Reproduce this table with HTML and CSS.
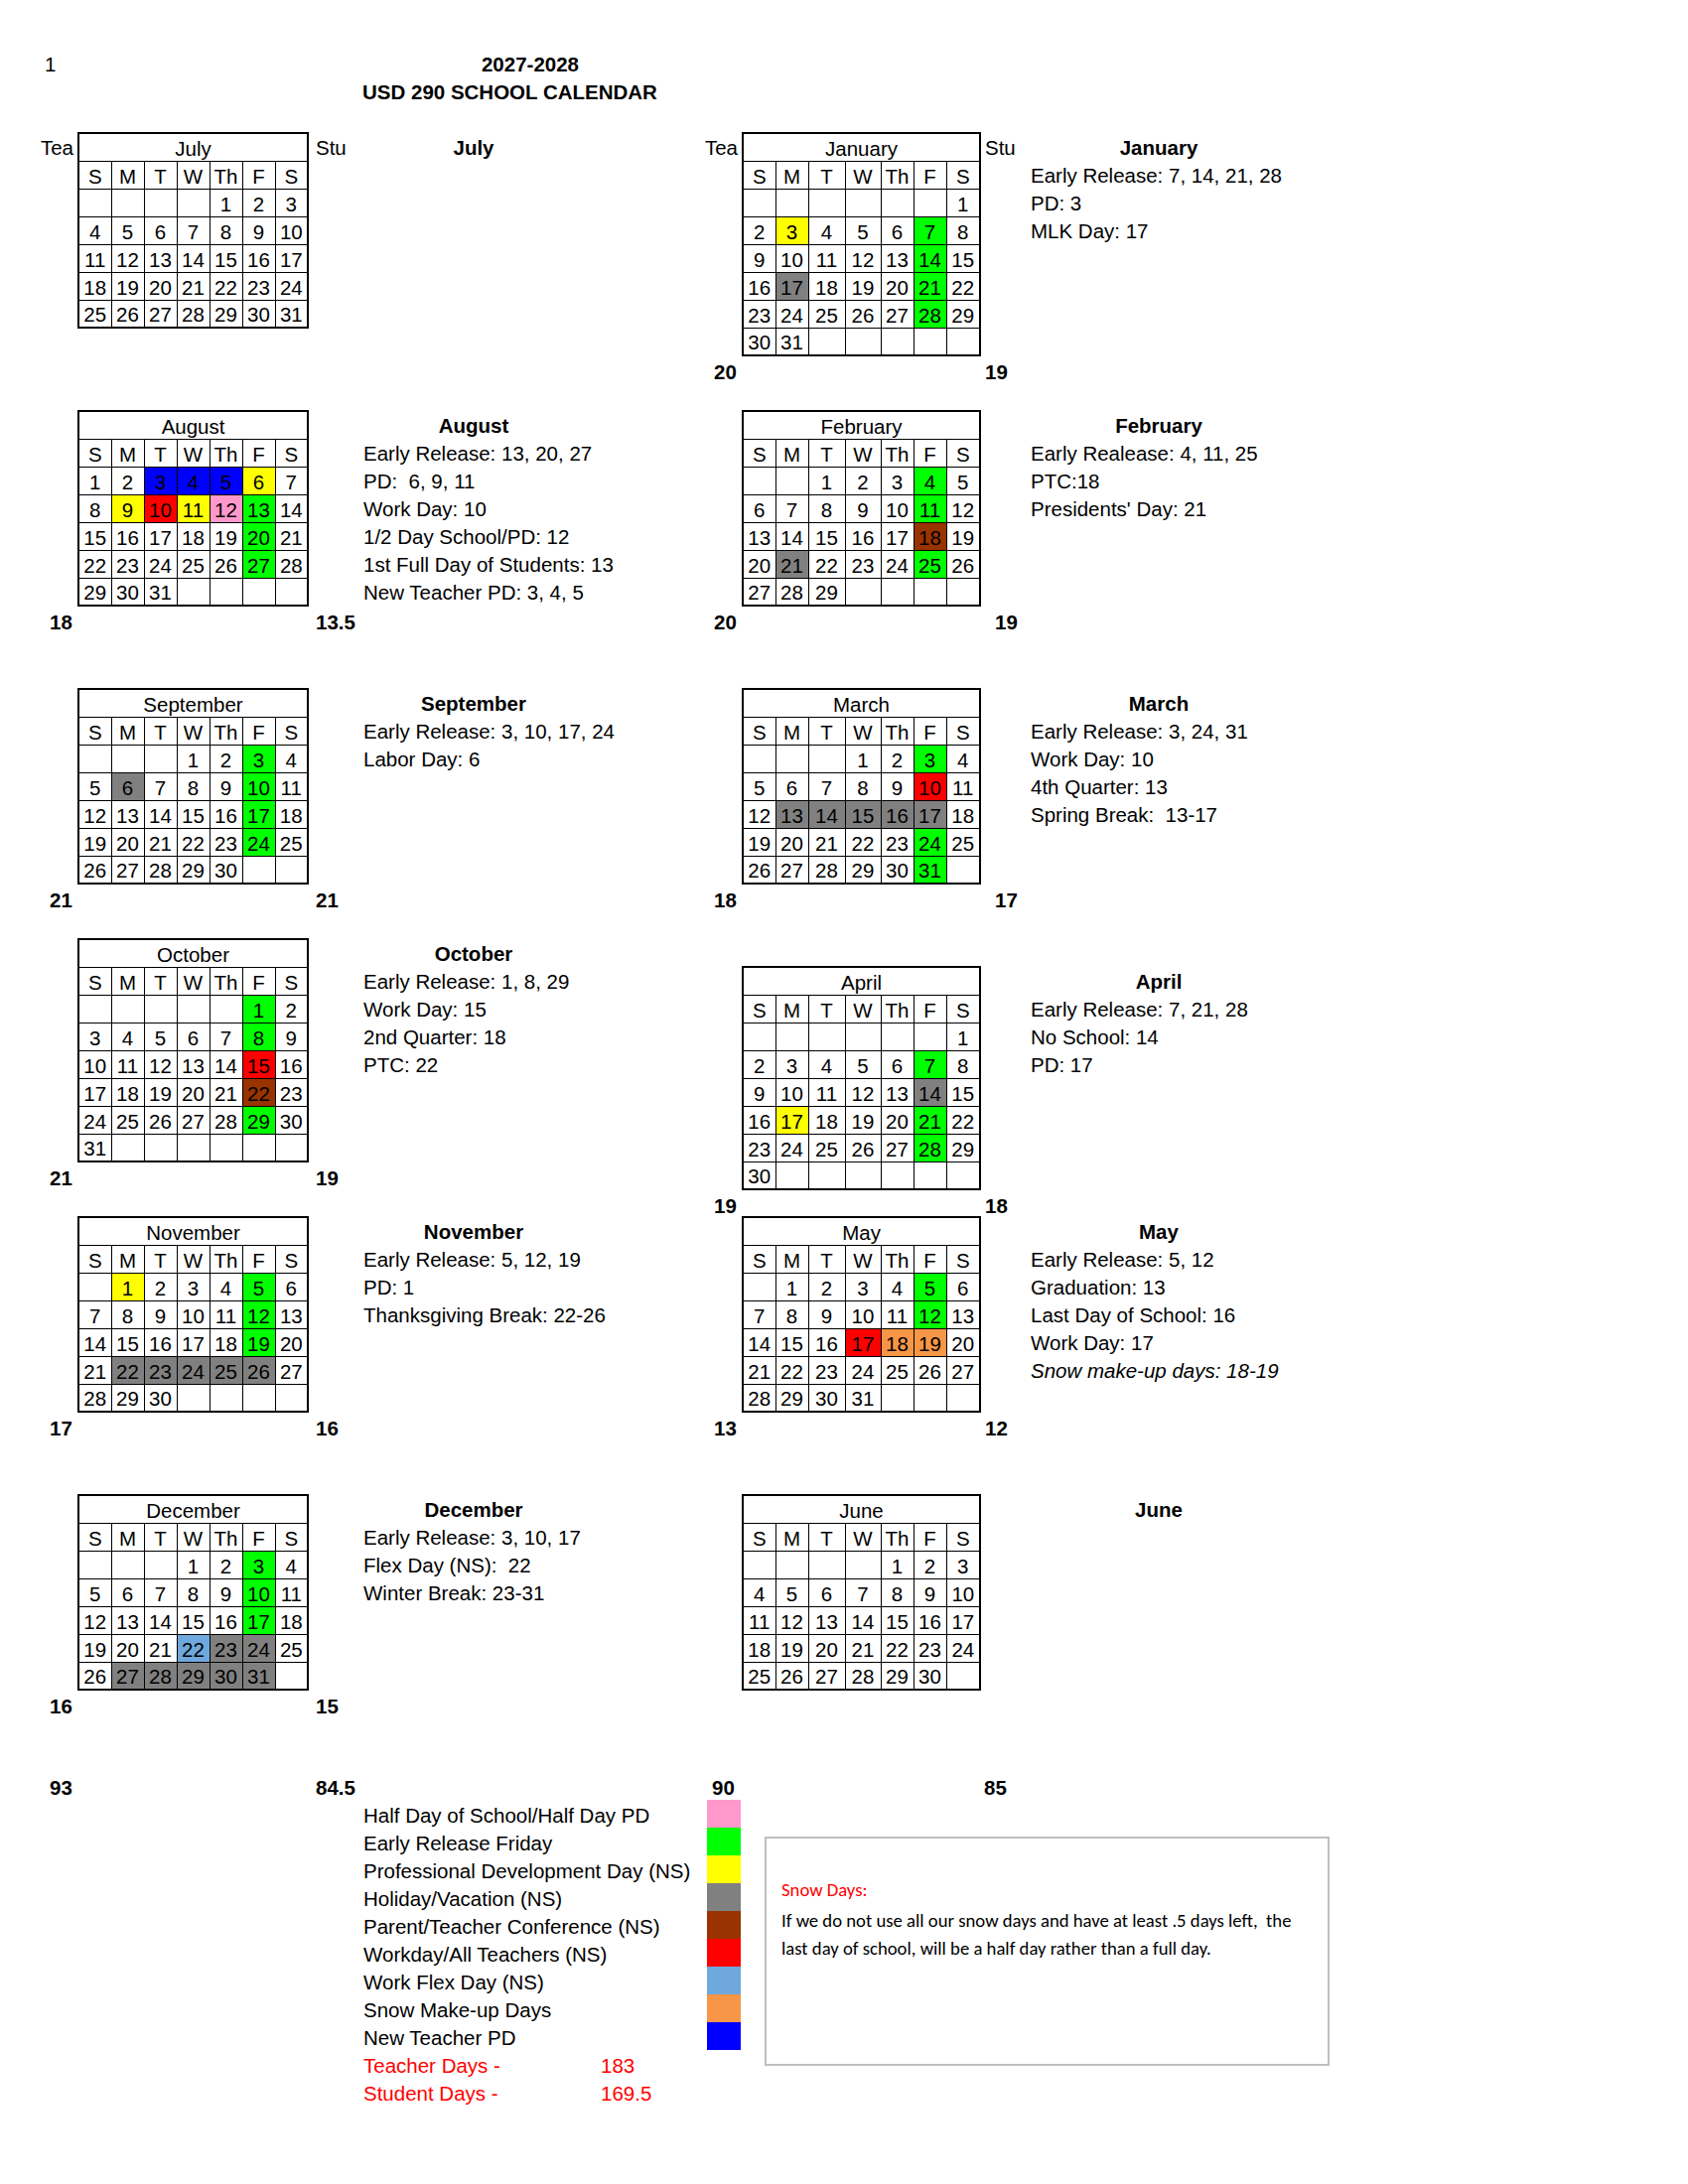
FILE: index.html
```html
<!DOCTYPE html>
<html lang="en">
<head>
<meta charset="utf-8">
<title>USD 290 School Calendar 2027-2028</title>
<link rel="stylesheet" href="styles.css">
</head>
<body>
<div class="page">
  <div class="hdr">
    <div class="hdr-row line"><span class="pg-num">1</span><span class="yr">2027-2028</span></div>
    <div class="line title">USD 290 SCHOOL CALENDAR</div>
  </div>

  <!-- July / January -->
  <div class="band">
    <div class="side left">
      <div class="tea"><div class="line lbl">Tea</div></div>
      <div class="cal-wrap">
        <table class="cal">
          <colgroup><col class="c33"><col class="c33"><col class="c33"><col class="c33"><col class="c33"><col class="c33"><col class="c33"></colgroup>
          <tr><th colspan="7">July</th></tr>
          <tr><td>S</td><td>M</td><td>T</td><td>W</td><td>Th</td><td>F</td><td>S</td></tr>
          <tr><td></td><td></td><td></td><td></td><td>1</td><td>2</td><td>3</td></tr>
          <tr><td>4</td><td>5</td><td>6</td><td>7</td><td>8</td><td>9</td><td>10</td></tr>
          <tr><td>11</td><td>12</td><td>13</td><td>14</td><td>15</td><td>16</td><td>17</td></tr>
          <tr><td>18</td><td>19</td><td>20</td><td>21</td><td>22</td><td>23</td><td>24</td></tr>
          <tr><td>25</td><td>26</td><td>27</td><td>28</td><td>29</td><td>30</td><td>31</td></tr>
        </table>
      </div>
      <div class="stu"><div class="line">Stu</div></div>
      <div class="desc"><div class="line head">July</div></div>
    </div>
    <div class="side right">
      <div class="tea"><div class="line lbl">Tea</div><div class="line tot">20</div></div>
      <div class="cal-wrap">
        <table class="cal">
          <colgroup><col class="c33"><col class="c33"><col class="c37"><col class="c36"><col class="c33"><col class="c33"><col class="c34"></colgroup>
          <tr><th colspan="7">January</th></tr>
          <tr><td>S</td><td>M</td><td>T</td><td>W</td><td>Th</td><td>F</td><td>S</td></tr>
          <tr><td></td><td></td><td></td><td></td><td></td><td></td><td>1</td></tr>
          <tr><td>2</td><td class="y">3</td><td>4</td><td>5</td><td>6</td><td class="g">7</td><td>8</td></tr>
          <tr><td>9</td><td>10</td><td>11</td><td>12</td><td>13</td><td class="g">14</td><td>15</td></tr>
          <tr><td>16</td><td class="k">17</td><td>18</td><td>19</td><td>20</td><td class="g">21</td><td>22</td></tr>
          <tr><td>23</td><td>24</td><td>25</td><td>26</td><td>27</td><td class="g">28</td><td>29</td></tr>
          <tr><td>30</td><td>31</td><td></td><td></td><td></td><td></td><td></td></tr>
        </table>
        <div class="line"></div>
      </div>
      <div class="stu"><div class="line">Stu</div><div class="line tot">19</div></div>
      <div class="desc">
        <div class="line head">January</div>
        <div class="line">Early Release: 7, 14, 21, 28</div>
        <div class="line">PD: 3</div>
        <div class="line">MLK Day: 17</div>
      </div>
    </div>
  </div>

  <!-- August / February -->
  <div class="band">
    <div class="side left">
      <div class="tea"><div class="line tot">18</div></div>
      <div class="cal-wrap">
        <table class="cal">
          <colgroup><col class="c33"><col class="c33"><col class="c33"><col class="c33"><col class="c33"><col class="c33"><col class="c33"></colgroup>
          <tr><th colspan="7">August</th></tr>
          <tr><td>S</td><td>M</td><td>T</td><td>W</td><td>Th</td><td>F</td><td>S</td></tr>
          <tr><td>1</td><td>2</td><td class="b">3</td><td class="b">4</td><td class="b">5</td><td class="y">6</td><td>7</td></tr>
          <tr><td>8</td><td class="y">9</td><td class="r">10</td><td class="y">11</td><td class="p">12</td><td class="g">13</td><td>14</td></tr>
          <tr><td>15</td><td>16</td><td>17</td><td>18</td><td>19</td><td class="g">20</td><td>21</td></tr>
          <tr><td>22</td><td>23</td><td>24</td><td>25</td><td>26</td><td class="g">27</td><td>28</td></tr>
          <tr><td>29</td><td>30</td><td>31</td><td></td><td></td><td></td><td></td></tr>
        </table>
        <div class="line"></div>
      </div>
      <div class="stu"><div class="line tot">13.5</div></div>
      <div class="desc">
        <div class="line head">August</div>
        <div class="line">Early Release: 13, 20, 27</div>
        <div class="line">PD: &nbsp;6, 9, 11</div>
        <div class="line">Work Day: 10</div>
        <div class="line">1/2 Day School/PD: 12</div>
        <div class="line">1st Full Day of Students: 13</div>
        <div class="line">New Teacher PD: 3, 4, 5</div>
      </div>
    </div>
    <div class="side right">
      <div class="tea"><div class="line tot">20</div></div>
      <div class="cal-wrap">
        <table class="cal">
          <colgroup><col class="c33"><col class="c33"><col class="c37"><col class="c36"><col class="c33"><col class="c33"><col class="c34"></colgroup>
          <tr><th colspan="7">February</th></tr>
          <tr><td>S</td><td>M</td><td>T</td><td>W</td><td>Th</td><td>F</td><td>S</td></tr>
          <tr><td></td><td></td><td>1</td><td>2</td><td>3</td><td class="g">4</td><td>5</td></tr>
          <tr><td>6</td><td>7</td><td>8</td><td>9</td><td>10</td><td class="g">11</td><td>12</td></tr>
          <tr><td>13</td><td>14</td><td>15</td><td>16</td><td>17</td><td class="n">18</td><td>19</td></tr>
          <tr><td>20</td><td class="k">21</td><td>22</td><td>23</td><td>24</td><td class="g">25</td><td>26</td></tr>
          <tr><td>27</td><td>28</td><td>29</td><td></td><td></td><td></td><td></td></tr>
        </table>
        <div class="line"></div>
      </div>
      <div class="stu"><div class="line tot far">19</div></div>
      <div class="desc">
        <div class="line head">February</div>
        <div class="line">Early Realease: 4, 11, 25</div>
        <div class="line">PTC:18</div>
        <div class="line">Presidents' Day: 21</div>
      </div>
    </div>
  </div>

  <!-- September / March -->
  <div class="band short">
    <div class="side left">
      <div class="tea"><div class="line tot">21</div></div>
      <div class="cal-wrap">
        <table class="cal">
          <colgroup><col class="c33"><col class="c33"><col class="c33"><col class="c33"><col class="c33"><col class="c33"><col class="c33"></colgroup>
          <tr><th colspan="7">September</th></tr>
          <tr><td>S</td><td>M</td><td>T</td><td>W</td><td>Th</td><td>F</td><td>S</td></tr>
          <tr><td></td><td></td><td></td><td>1</td><td>2</td><td class="g">3</td><td>4</td></tr>
          <tr><td>5</td><td class="k">6</td><td>7</td><td>8</td><td>9</td><td class="g">10</td><td>11</td></tr>
          <tr><td>12</td><td>13</td><td>14</td><td>15</td><td>16</td><td class="g">17</td><td>18</td></tr>
          <tr><td>19</td><td>20</td><td>21</td><td>22</td><td>23</td><td class="g">24</td><td>25</td></tr>
          <tr><td>26</td><td>27</td><td>28</td><td>29</td><td>30</td><td></td><td></td></tr>
        </table>
        <div class="line"></div>
      </div>
      <div class="stu"><div class="line tot">21</div></div>
      <div class="desc">
        <div class="line head">September</div>
        <div class="line">Early Release: 3, 10, 17, 24</div>
        <div class="line">Labor Day: 6</div>
      </div>
    </div>
    <div class="side right">
      <div class="tea"><div class="line tot">18</div></div>
      <div class="cal-wrap">
        <table class="cal">
          <colgroup><col class="c33"><col class="c33"><col class="c37"><col class="c36"><col class="c33"><col class="c33"><col class="c34"></colgroup>
          <tr><th colspan="7">March</th></tr>
          <tr><td>S</td><td>M</td><td>T</td><td>W</td><td>Th</td><td>F</td><td>S</td></tr>
          <tr><td></td><td></td><td></td><td>1</td><td>2</td><td class="g">3</td><td>4</td></tr>
          <tr><td>5</td><td>6</td><td>7</td><td>8</td><td>9</td><td class="r">10</td><td>11</td></tr>
          <tr><td>12</td><td class="k">13</td><td class="k">14</td><td class="k">15</td><td class="k">16</td><td class="k">17</td><td>18</td></tr>
          <tr><td>19</td><td>20</td><td>21</td><td>22</td><td>23</td><td class="g">24</td><td>25</td></tr>
          <tr><td>26</td><td>27</td><td>28</td><td>29</td><td>30</td><td class="g">31</td><td></td></tr>
        </table>
        <div class="line"></div>
      </div>
      <div class="stu"><div class="line tot far">17</div></div>
      <div class="desc">
        <div class="line head">March</div>
        <div class="line">Early Release: 3, 24, 31</div>
        <div class="line">Work Day: 10</div>
        <div class="line">4th Quarter: 13</div>
        <div class="line">Spring Break: &nbsp;13-17</div>
      </div>
    </div>
  </div>

  <!-- October / April -->
  <div class="band">
    <div class="side left">
      <div class="tea"><div class="line tot">21</div></div>
      <div class="cal-wrap">
        <table class="cal">
          <colgroup><col class="c33"><col class="c33"><col class="c33"><col class="c33"><col class="c33"><col class="c33"><col class="c33"></colgroup>
          <tr><th colspan="7">October</th></tr>
          <tr><td>S</td><td>M</td><td>T</td><td>W</td><td>Th</td><td>F</td><td>S</td></tr>
          <tr><td></td><td></td><td></td><td></td><td></td><td class="g">1</td><td>2</td></tr>
          <tr><td>3</td><td>4</td><td>5</td><td>6</td><td>7</td><td class="g">8</td><td>9</td></tr>
          <tr><td>10</td><td>11</td><td>12</td><td>13</td><td>14</td><td class="r">15</td><td>16</td></tr>
          <tr><td>17</td><td>18</td><td>19</td><td>20</td><td>21</td><td class="n">22</td><td>23</td></tr>
          <tr><td>24</td><td>25</td><td>26</td><td>27</td><td>28</td><td class="g">29</td><td>30</td></tr>
          <tr><td>31</td><td></td><td></td><td></td><td></td><td></td><td></td></tr>
        </table>
        <div class="line"></div>
      </div>
      <div class="stu"><div class="line tot">19</div></div>
      <div class="desc">
        <div class="line head">October</div>
        <div class="line">Early Release: 1, 8, 29</div>
        <div class="line">Work Day: 15</div>
        <div class="line">2nd Quarter: 18</div>
        <div class="line">PTC: 22</div>
      </div>
    </div>
    <div class="side right shift">
      <div class="tea"><div class="line tot">19</div></div>
      <div class="cal-wrap">
        <table class="cal">
          <colgroup><col class="c33"><col class="c33"><col class="c37"><col class="c36"><col class="c33"><col class="c33"><col class="c34"></colgroup>
          <tr><th colspan="7">April</th></tr>
          <tr><td>S</td><td>M</td><td>T</td><td>W</td><td>Th</td><td>F</td><td>S</td></tr>
          <tr><td></td><td></td><td></td><td></td><td></td><td></td><td>1</td></tr>
          <tr><td>2</td><td>3</td><td>4</td><td>5</td><td>6</td><td class="g">7</td><td>8</td></tr>
          <tr><td>9</td><td>10</td><td>11</td><td>12</td><td>13</td><td class="k">14</td><td>15</td></tr>
          <tr><td>16</td><td class="y">17</td><td>18</td><td>19</td><td>20</td><td class="g">21</td><td>22</td></tr>
          <tr><td>23</td><td>24</td><td>25</td><td>26</td><td>27</td><td class="g">28</td><td>29</td></tr>
          <tr><td>30</td><td></td><td></td><td></td><td></td><td></td><td></td></tr>
        </table>
        <div class="line"></div>
      </div>
      <div class="stu"><div class="line tot">18</div></div>
      <div class="desc">
        <div class="line head">April</div>
        <div class="line">Early Release: 7, 21, 28</div>
        <div class="line">No School: 14</div>
        <div class="line">PD: 17</div>
      </div>
    </div>
  </div>

  <!-- November / May -->
  <div class="band">
    <div class="side left">
      <div class="tea"><div class="line tot">17</div></div>
      <div class="cal-wrap">
        <table class="cal">
          <colgroup><col class="c33"><col class="c33"><col class="c33"><col class="c33"><col class="c33"><col class="c33"><col class="c33"></colgroup>
          <tr><th colspan="7">November</th></tr>
          <tr><td>S</td><td>M</td><td>T</td><td>W</td><td>Th</td><td>F</td><td>S</td></tr>
          <tr><td></td><td class="y">1</td><td>2</td><td>3</td><td>4</td><td class="g">5</td><td>6</td></tr>
          <tr><td>7</td><td>8</td><td>9</td><td>10</td><td>11</td><td class="g">12</td><td>13</td></tr>
          <tr><td>14</td><td>15</td><td>16</td><td>17</td><td>18</td><td class="g">19</td><td>20</td></tr>
          <tr><td>21</td><td class="k">22</td><td class="k">23</td><td class="k">24</td><td class="k">25</td><td class="k">26</td><td>27</td></tr>
          <tr><td>28</td><td>29</td><td>30</td><td></td><td></td><td></td><td></td></tr>
        </table>
        <div class="line"></div>
      </div>
      <div class="stu"><div class="line tot">16</div></div>
      <div class="desc">
        <div class="line head">November</div>
        <div class="line">Early Release: 5, 12, 19</div>
        <div class="line">PD: 1</div>
        <div class="line">Thanksgiving Break: 22-26</div>
      </div>
    </div>
    <div class="side right">
      <div class="tea"><div class="line tot">13</div></div>
      <div class="cal-wrap">
        <table class="cal">
          <colgroup><col class="c33"><col class="c33"><col class="c37"><col class="c36"><col class="c33"><col class="c33"><col class="c34"></colgroup>
          <tr><th colspan="7">May</th></tr>
          <tr><td>S</td><td>M</td><td>T</td><td>W</td><td>Th</td><td>F</td><td>S</td></tr>
          <tr><td></td><td>1</td><td>2</td><td>3</td><td>4</td><td class="g">5</td><td>6</td></tr>
          <tr><td>7</td><td>8</td><td>9</td><td>10</td><td>11</td><td class="g">12</td><td>13</td></tr>
          <tr><td>14</td><td>15</td><td>16</td><td class="r">17</td><td class="o">18</td><td class="o">19</td><td>20</td></tr>
          <tr><td>21</td><td>22</td><td>23</td><td>24</td><td>25</td><td>26</td><td>27</td></tr>
          <tr><td>28</td><td>29</td><td>30</td><td>31</td><td></td><td></td><td></td></tr>
        </table>
        <div class="line"></div>
      </div>
      <div class="stu"><div class="line tot">12</div></div>
      <div class="desc">
        <div class="line head">May</div>
        <div class="line">Early Release: 5, 12</div>
        <div class="line">Graduation: 13</div>
        <div class="line">Last Day of School: 16</div>
        <div class="line">Work Day: 17</div>
        <div class="line it">Snow make-up days: 18-19</div>
      </div>
    </div>
  </div>

  <!-- December / June -->
  <div class="band">
    <div class="side left">
      <div class="tea"><div class="line tot">16</div></div>
      <div class="cal-wrap">
        <table class="cal">
          <colgroup><col class="c33"><col class="c33"><col class="c33"><col class="c33"><col class="c33"><col class="c33"><col class="c33"></colgroup>
          <tr><th colspan="7">December</th></tr>
          <tr><td>S</td><td>M</td><td>T</td><td>W</td><td>Th</td><td>F</td><td>S</td></tr>
          <tr><td></td><td></td><td></td><td>1</td><td>2</td><td class="g">3</td><td>4</td></tr>
          <tr><td>5</td><td>6</td><td>7</td><td>8</td><td>9</td><td class="g">10</td><td>11</td></tr>
          <tr><td>12</td><td>13</td><td>14</td><td>15</td><td>16</td><td class="g">17</td><td>18</td></tr>
          <tr><td>19</td><td>20</td><td>21</td><td class="l">22</td><td class="k">23</td><td class="k">24</td><td>25</td></tr>
          <tr><td>26</td><td class="k">27</td><td class="k">28</td><td class="k">29</td><td class="k">30</td><td class="k">31</td><td></td></tr>
        </table>
        <div class="line"></div>
      </div>
      <div class="stu"><div class="line tot">15</div></div>
      <div class="desc">
        <div class="line head">December</div>
        <div class="line">Early Release: 3, 10, 17</div>
        <div class="line">Flex Day (NS): &nbsp;22</div>
        <div class="line">Winter Break: 23-31</div>
      </div>
    </div>
    <div class="side right">
      <div class="tea"></div>
      <div class="cal-wrap">
        <table class="cal">
          <colgroup><col class="c33"><col class="c33"><col class="c37"><col class="c36"><col class="c33"><col class="c33"><col class="c34"></colgroup>
          <tr><th colspan="7">June</th></tr>
          <tr><td>S</td><td>M</td><td>T</td><td>W</td><td>Th</td><td>F</td><td>S</td></tr>
          <tr><td></td><td></td><td></td><td></td><td>1</td><td>2</td><td>3</td></tr>
          <tr><td>4</td><td>5</td><td>6</td><td>7</td><td>8</td><td>9</td><td>10</td></tr>
          <tr><td>11</td><td>12</td><td>13</td><td>14</td><td>15</td><td>16</td><td>17</td></tr>
          <tr><td>18</td><td>19</td><td>20</td><td>21</td><td>22</td><td>23</td><td>24</td></tr>
          <tr><td>25</td><td>26</td><td>27</td><td>28</td><td>29</td><td>30</td><td></td></tr>
        </table>
      </div>
      <div class="stu"></div>
      <div class="desc"><div class="line head">June</div></div>
    </div>
  </div>

  <!-- Totals and legend -->
  <div class="foot">
    <div class="line foot-tot"><span class="ft1">93</span><span class="ft2">84.5</span><span class="ft3">90</span><span>85</span></div>
    <div class="foot-main">
      <div class="legend">
        <div class="line">Half Day of School/Half Day PD</div><div></div><div class="sw p"></div>
        <div class="line">Early Release Friday</div><div></div><div class="sw g"></div>
        <div class="line">Professional Development Day (NS)</div><div></div><div class="sw y"></div>
        <div class="line">Holiday/Vacation (NS)</div><div></div><div class="sw k"></div>
        <div class="line">Parent/Teacher Conference (NS)</div><div></div><div class="sw n"></div>
        <div class="line">Workday/All Teachers (NS)</div><div></div><div class="sw r"></div>
        <div class="line">Work Flex Day (NS)</div><div></div><div class="sw l"></div>
        <div class="line">Snow Make-up Days</div><div></div><div class="sw o"></div>
        <div class="line">New Teacher PD</div><div></div><div class="sw b"></div>
        <div class="line red">Teacher Days -</div><div class="line red">183</div><div></div>
        <div class="line red">Student Days -</div><div class="line red">169.5</div><div></div>
      </div>
      <div class="snow-box">
        <div class="snow-line sh">Snow Days:</div>
        <div class="snow-line">If we do not use all our snow days and have at least .5 days left, &nbsp;the</div>
        <div class="snow-line">last day of school, will be a half day rather than a full day.</div>
      </div>
    </div>
  </div>
</div>
</body>
</html>
```

FILE: styles.css
```css
* { box-sizing: border-box; }

body {
  margin: 0;
  background: #fff;
  color: #000;
  font-family: "Liberation Sans", Arial, sans-serif;
  font-size: 20.5px;
}

.page {
  width: 1700px;
  height: 2200px;
  padding-top: 49px;
}

.line {
  height: 28px;
  line-height: 28px;
  padding-top: 2px;
  white-space: nowrap;
}

/* header */
.hdr { height: 84px; }
.hdr-row { display: flex; }
.pg-num { width: 434px; padding-left: 45px; }
.yr { width: 200px; text-align: center; font-weight: bold; }
.title { padding-left: 365px; font-weight: bold; }

/* month bands */
.band {
  display: flex;
  align-items: flex-start;
  height: 280px;
}
.band.short { height: 252px; }

.side { display: flex; align-items: stretch; }
.side.left { width: 588px; }
.side.right { width: 708px; }
.side.shift { margin-top: 28px; }

.tea, .stu { display: flex; flex-direction: column; }
.left .tea { width: 78px; }
.right .tea { width: 159px; }
.tea .lbl { text-align: right; padding-right: 4px; }
.left .tea .tot { padding-left: 50px; }
.right .tea .tot { padding-left: 131px; }

.left .stu { width: 57px; padding-left: 9px; }
.right .stu { width: 52px; padding-left: 6px; }
.stu .far { padding-left: 10px; }

.tot { margin-top: auto; font-weight: bold; }

.left .cal-wrap { width: 231px; }
.right .cal-wrap { width: 239px; }

.left .desc { width: 222px; }
.right .desc { width: 258px; }
.desc .head { text-align: center; font-weight: bold; }
.desc .it { font-style: italic; }

/* calendar table */
.cal {
  border-collapse: collapse;
  table-layout: fixed;
  width: 100%;
  border: 2px solid #000;
}
.cal tr { height: 28px; }
.cal td, .cal th {
  border: 1px solid #000;
  padding: 0;
  line-height: 24px;
  vertical-align: bottom;
  text-align: center;
  font-weight: normal;
  white-space: nowrap;
  overflow: hidden;
}
.c33 { width: 33px; }
.c34 { width: 34px; }
.c36 { width: 36px; }
.c37 { width: 37px; }

/* day colours */
.b { background: #0000ff; }
.y { background: #ffff00; }
.r { background: #ff0000; }
.p { background: #ff99cc; }
.g { background: #00ff00; }
.k { background: #808080; }
.n { background: #993300; }
.l { background: #6fa8dc; }
.o { background: #f79646; }

/* footer */
.foot-tot { display: flex; font-weight: bold; padding-left: 50px; }
.ft1 { width: 268px; }
.ft2 { width: 399px; }
.ft3 { width: 274px; }

.foot-main {
  display: flex;
  align-items: flex-start;
  padding-left: 366px;
}
.legend {
  display: grid;
  grid-template-columns: 239px 107px 34px;
  grid-auto-rows: 28px;
}
.sw { height: 28px; }
.red { color: #ff0000; }

.snow-box {
  margin-left: 24px;
  margin-top: 37px;
  width: 569px;
  height: 231px;
  border: 2px solid #bfbfbf;
  padding: 38px 0 0 15px;
  font-family: Carlito, "Liberation Sans", Arial, sans-serif;
  font-size: 18.7px;
}
.snow-line {
  height: 28px;
  line-height: 28px;
  white-space: nowrap;
}
.snow-line.sh { color: #ff0000; margin-bottom: 3px; }
```
